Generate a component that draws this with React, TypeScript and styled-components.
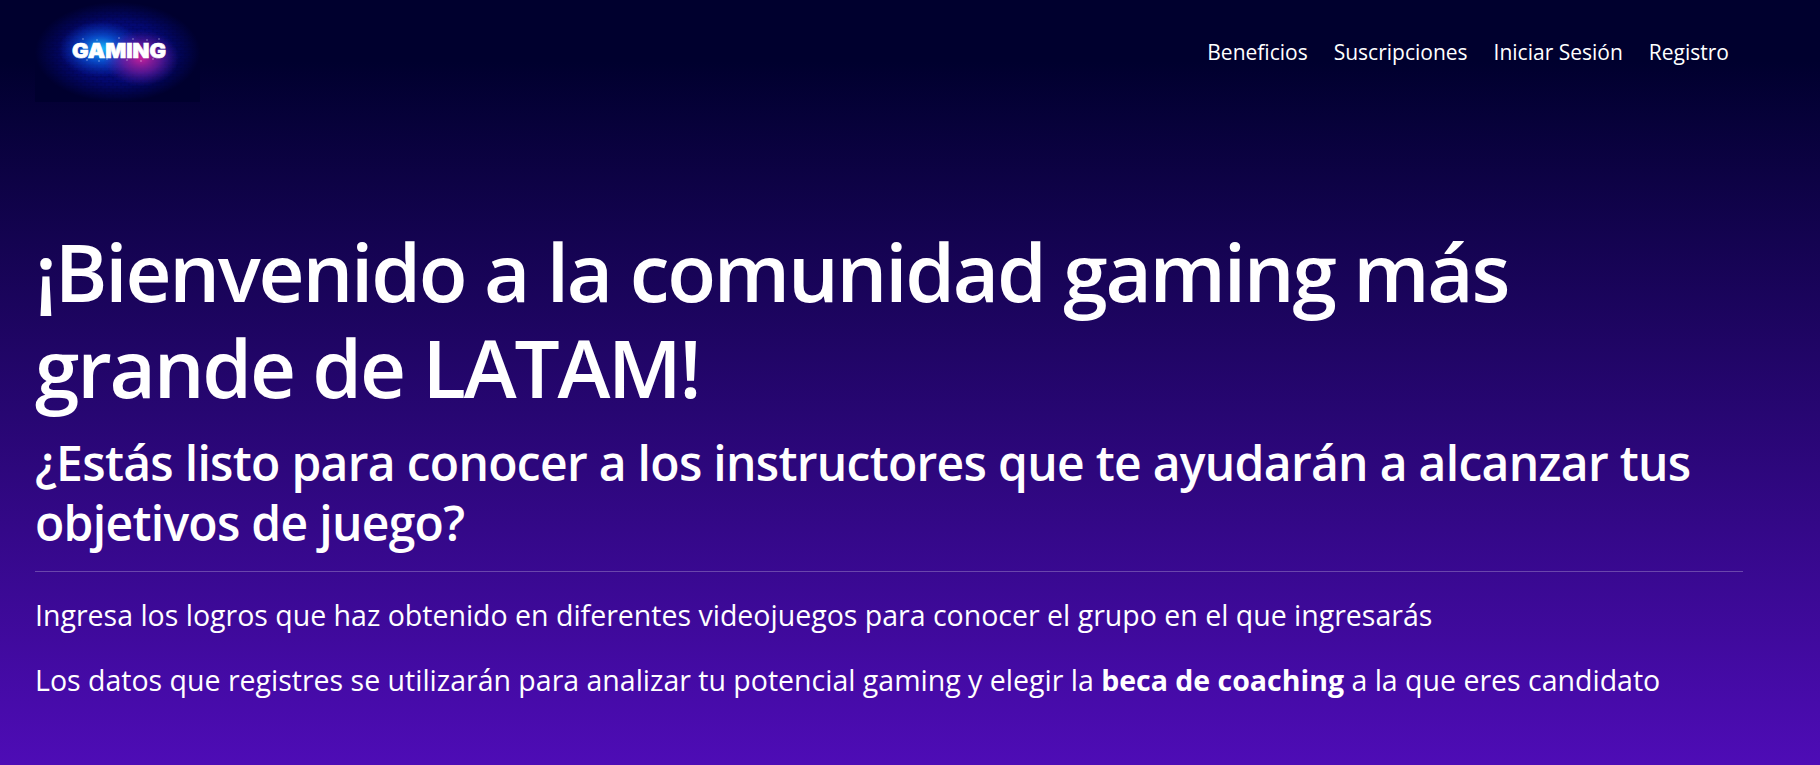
import styled, { createGlobalStyle } from 'styled-components'

const GlobalStyle = createGlobalStyle`
  * {
    box-sizing: border-box;
  }
  body {
    margin: 0;
    font-family: 'Open Sans', 'Noto Sans', sans-serif;
    color: #fff;
    background: #4c0db3;
  }
`

const Page = styled.div`
  min-height: 765px;
  height: 765px;
  overflow: hidden;
  background: linear-gradient(180deg, #00002e 0%, #00002e 8%, #4e0cb6 100%);
`

const Navbar = styled.nav`
  height: 103px;
  padding: 0 91px 0 35px;
  display: flex;
  align-items: center;
  justify-content: space-between;
`

const NavLinks = styled.ul`
  list-style: none;
  display: flex;
  gap: 26px;
  margin: 0;
  padding: 0;
`

const NavLink = styled.a`
  color: #fff;
  font-size: 21px;
  text-decoration: none;
`

const Hero = styled.main`
  padding: 120px 77px 0 35px;
`

const Title = styled.h1`
  margin: 0 0 18px;
  font-size: 80px;
  line-height: 96px;
  font-weight: 600;
  letter-spacing: -2.2px;
`

const Subtitle = styled.h2`
  margin: 0;
  font-size: 48px;
  line-height: 60px;
  font-weight: 600;
  letter-spacing: -0.7px;
`

const Divider = styled.hr`
  margin: 18px 0 25px;
  border: 0;
  border-top: 1px solid rgba(255, 255, 255, 0.25);
`

const Lead = styled.p`
  margin: 0 0 29px;
  font-size: 28.5px;
  line-height: 36px;

  strong {
    font-weight: 700;
  }
`

const specks = [
  [48, 37], [62, 38], [84, 36], [98, 37], [112, 38], [124, 37],
  [52, 58], [64, 59], [72, 57], [92, 58], [106, 59], [118, 57],
]

const Logo = () => (
  <svg width="165" height="100" viewBox="0 0 165 100" role="img" aria-label="Gaming">
    <defs>
      <radialGradient id="halo">
        <stop offset="0%" stopColor="#050f96" />
        <stop offset="60%" stopColor="#030870" />
        <stop offset="100%" stopColor="#00002e" />
      </radialGradient>
      <radialGradient id="blue">
        <stop offset="0%" stopColor="#1cc8ff" />
        <stop offset="45%" stopColor="#0a5fe0" stopOpacity="0.75" />
        <stop offset="100%" stopColor="#0a3ad0" stopOpacity="0" />
      </radialGradient>
      <radialGradient id="pink">
        <stop offset="0%" stopColor="#c8209a" />
        <stop offset="50%" stopColor="#7d1ca0" stopOpacity="0.7" />
        <stop offset="100%" stopColor="#4a1aa0" stopOpacity="0" />
      </radialGradient>
      <pattern id="bricks" width="8" height="6" patternUnits="userSpaceOnUse">
        <path d="M0 0H8M0 3H8M2 0V3M6 3V6" stroke="#00002e" strokeOpacity="0.25" fill="none" />
      </pattern>
    </defs>
    <rect width="165" height="100" fill="url(#halo)" />
    <rect width="165" height="100" fill="url(#bricks)" />
    <ellipse cx="66" cy="47" rx="42" ry="28" fill="url(#blue)" />
    <ellipse cx="106" cy="56" rx="38" ry="28" fill="url(#pink)" />
    {specks.map(([cx, cy]) => (
      <circle key={`${cx}-${cy}`} cx={cx} cy={cy} r="0.7" fill="#fff" fillOpacity="0.6" />
    ))}
    <text
      x="37"
      y="56"
      fill="#fff"
      stroke="#fff"
      strokeWidth="0.6"
      fontFamily="Inter, 'Liberation Sans', sans-serif"
      fontSize="19.5"
      fontWeight="900"
      textLength="94"
      lengthAdjust="spacingAndGlyphs"
    >
      GAMING
    </text>
  </svg>
)

const links = ['Beneficios', 'Suscripciones', 'Iniciar Sesión', 'Registro']

export default function App() {
  return (
    <Page>
      <GlobalStyle />
      <Navbar>
        <Logo />
        <NavLinks>
          {links.map((label) => (
            <li key={label}>
              <NavLink href="#">{label}</NavLink>
            </li>
          ))}
        </NavLinks>
      </Navbar>
      <Hero>
        <Title>¡Bienvenido a la comunidad gaming más grande de LATAM!</Title>
        <Subtitle>¿Estás listo para conocer a los instructores que te ayudarán a alcanzar tus objetivos de juego?</Subtitle>
        <Divider />
        <Lead>Ingresa los logros que haz obtenido en diferentes videojuegos para conocer el grupo en el que ingresarás</Lead>
        <Lead>
          Los datos que registres se utilizarán para analizar tu potencial gaming y elegir la <strong>beca de coaching</strong> a la que eres candidato
        </Lead>
      </Hero>
    </Page>
  )
}
